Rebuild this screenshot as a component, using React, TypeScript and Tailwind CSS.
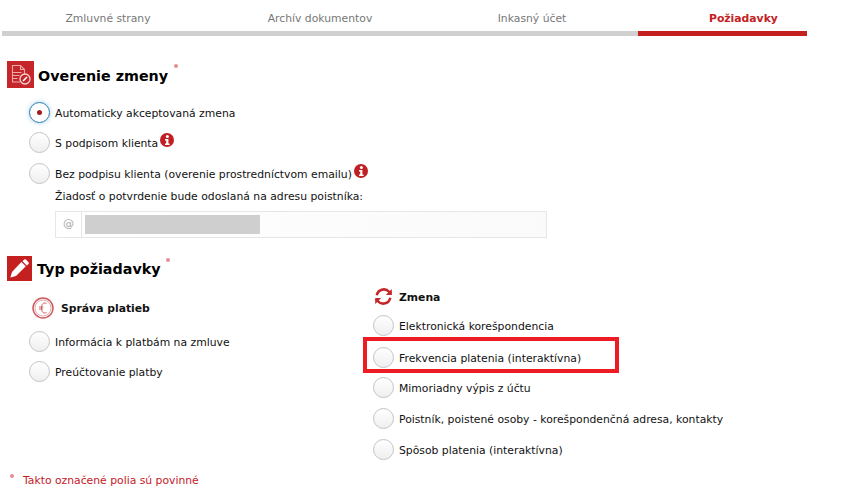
import React from "react";

const font = { fontFamily: '"DejaVu Sans", Verdana, sans-serif' };

function Radio({ checked = false }: { checked?: boolean }) {
  return (
    <span
      className={
        checked
          ? "flex h-[21px] w-[21px] shrink-0 items-center justify-center rounded-full border-[1.5px] border-[#2f7fae] bg-white shadow-[0_0_5px_#a9d3ec]"
          : "block h-[21px] w-[21px] shrink-0 rounded-full border border-[#c4c4c4] bg-gradient-to-b from-white to-[#efefef]"
      }
    >
      {checked && <span className="block h-[5px] w-[5px] rounded-full bg-[#a11c22]" />}
    </span>
  );
}

function Info() {
  return (
    <svg width="14" height="14" viewBox="0 0 14 14" className="shrink-0">
      <circle cx="7" cy="7" r="7" fill="#c01f24" />
      <circle cx="7.4" cy="3.4" r="1.5" fill="#fff" />
      <path d="M5 6h3.4v4.600H9.600V12H5v-1.400h1.200V7.400H5z" fill="#fff" />
    </svg>
  );
}

function Row({ label, checked, info, className = "" }: { label: string; checked?: boolean; info?: boolean; className?: string }) {
  return (
    <div className={"flex items-center gap-[5px] " + className}>
      <Radio checked={checked} />
      <span className="mt-[2px] text-[10.8px] leading-[14px] text-[#111111]">{label}</span>
      {info && <span className="-ml-[3px] -mt-[6px]"><Info /></span>}
    </div>
  );
}

function Star({ className = "" }: { className?: string }) {
  return <span className={"block h-[4px] w-[4px] rounded-full bg-[#e58d92] " + className} />;
}

export default function App() {
  return (
    <div className="h-[500px] w-[868px] overflow-hidden bg-white" style={font}>
      {/* tabs */}
      <div className="ml-[2px] flex w-[805px] pt-[12px]">
        {["Zmluvné strany", "Archív dokumentov", "Inkasný účet"].map((t) => (
          <div key={t} className="w-[212px] border-b-[5px] border-[#d0d0d0] pb-[5px] text-center text-[10.8px] leading-[14px] text-[#777777]">
            {t}
          </div>
        ))}
        <div className="w-[169px] border-b-[5px] border-[#c4201f] pb-[5px] pl-[71px] text-[10.8px] font-bold leading-[14px] whitespace-nowrap text-[#c4201f]">
          Požiadavky
        </div>
      </div>

      {/* Overenie zmeny */}
      <div className="ml-[7px] mt-[25px] flex items-start">
        <div className="flex h-[27px] w-[27px] items-center justify-center bg-[#c4262a]">
          <svg width="23" height="23" viewBox="0 0 23 23" fill="none" stroke="#eda9a9" strokeWidth="1.100">
            <path d="M11 19H3.500V2.500H11.500L15.500 6.500V11" />
            <path d="M11.500 2.500v4h4" />
            <path d="M3.500 9.500h9M3.500 12.500h7M3.500 15.500h5" />
            <circle cx="16" cy="16" r="5" fill="#c4262a" stroke="#f6d4d4" strokeWidth="1.300" />
            <path d="M14 18l4-4" stroke="#fff" strokeWidth="1.600" />
          </svg>
        </div>
        <h2 className="ml-[4px] mt-[6px] text-[14.3px] font-bold leading-[18px] text-black">Overenie zmeny</h2>
        <Star className="ml-[6px] mt-[3px]" />
      </div>

      <div className="ml-[29px] mt-[14px] flex flex-col">
        <Row label="Automaticky akceptovaná zmena" checked />
        <Row label="S podpisom klienta" info className="mt-[9px]" />
        <Row label="Bez podpisu klienta (overenie prostredníctvom emailu)" info className="mt-[10px]" />
        <div className="ml-[26px]">
          <p className="mt-[6px] text-[10.8px] leading-[14px] text-[#111111]">Žiadosť o potvrdenie bude odoslaná na adresu poistníka:</p>
          <div className="mt-[7px] flex h-[27px] w-[492px] items-center border border-[#e6e6e6] bg-gradient-to-r from-white to-[#fafafa]">
            <span className="flex h-full w-[26px] items-center justify-center border-r border-[#e6e6e6] text-[11px] text-[#a8a8a8]">@</span>
            <span className="ml-[3px] block h-[19px] w-[175px] bg-[#cfcfcf]" />
          </div>
        </div>
      </div>

      {/* Typ pozadavky */}
      <div className="ml-[7px] mt-[18px] flex items-start">
        <div className="flex h-[25px] w-[25px] items-center justify-center bg-[#c4201f]">
          <svg width="21" height="21" viewBox="0 0 21 21" fill="#fff">
            <path d="M15.200 1.600a1.200 1.200 0 0 1 1.700 0l2.600 2.600a1.200 1.200 0 0 1 0 1.700l-1.700 1.700-4.300-4.300z" />
            <path d="M12.400 3.900l4.400 4.400L7 18l-5.600 1.600L3 14z" />
          </svg>
        </div>
        <h2 className="ml-[5px] mt-[4px] text-[14.3px] font-bold leading-[18px] text-black">Typ požiadavky</h2>
        <Star className="ml-[5px] mt-[2px]" />
      </div>

      <div className="flex">
        <div className="ml-[29px] w-[344px]">
          <div className="ml-[3px] mt-[16px] flex items-center gap-[7px]">
            <svg width="22" height="22" viewBox="0 0 22 22" fill="none" stroke="#cf5a5e">
              <circle cx="11" cy="11" r="10" strokeWidth="1.500" />
              <circle cx="11" cy="11" r="8" strokeWidth="0.500" />
              <path d="M14.500 6.500c-3-1.500-5 .5-5 4.500s2 6 5 4.500M7 10h4.500M7 12h4" strokeWidth="1" />
            </svg>
            <span className="mt-[2px] text-[10.8px] font-bold leading-[14px] text-[#111]">Správa platieb</span>
          </div>
          <Row label="Informácia k platbám na zmluve" className="mt-[12px]" />
          <Row label="Preúčtovanie platby" className="mt-[9px]" />
        </div>

        <div className="mt-[6px] flex flex-col">
          <div className="ml-[1px] flex items-center gap-[6px]">
            <svg width="19" height="19" viewBox="0 0 24 24" fill="none" stroke="#c4262a" strokeWidth="3.200">
              <path d="M3.500 10.500A9 9 0 0 1 19 6l2.500 2.500" />
              <path d="M20.500 13.500A9 9 0 0 1 5 18l-2.500-2.500" />
              <path d="M22.500 2.500v7.500H15M1.500 21.500V14H9" fill="#c4262a" stroke="none" />
            </svg>
            <span className="mt-[2px] text-[10.8px] font-bold leading-[14px] text-[#111]">Zmena</span>
          </div>
          <Row label="Elektronická korešpondencia" className="mt-[9px]" />
          <div className="relative">
            <Row label="Frekvencia platenia (interaktívna)" className="mt-[11px]" />
            <div className="pointer-events-none absolute -left-[10px] top-[1px] h-[36px] w-[256px] border-[4px] border-[#ed1c24]" />
          </div>
          <Row label="Mimoriadny výpis z účtu" className="mt-[9px]" />
          <Row label="Poistník, poistené osoby - korešpondenčná adresa, kontakty" className="mt-[10px]" />
          <Row label="Spôsob platenia (interaktívna)" className="mt-[10px]" />
        </div>
      </div>

      <div className="ml-[10px] mt-[14px] flex text-[10.8px] leading-[14px] text-[#c4201f]">
        <Star className="mt-0" />
        <span className="ml-[9px]">Takto označené polia sú povinné</span>
      </div>
    </div>
  );
}
